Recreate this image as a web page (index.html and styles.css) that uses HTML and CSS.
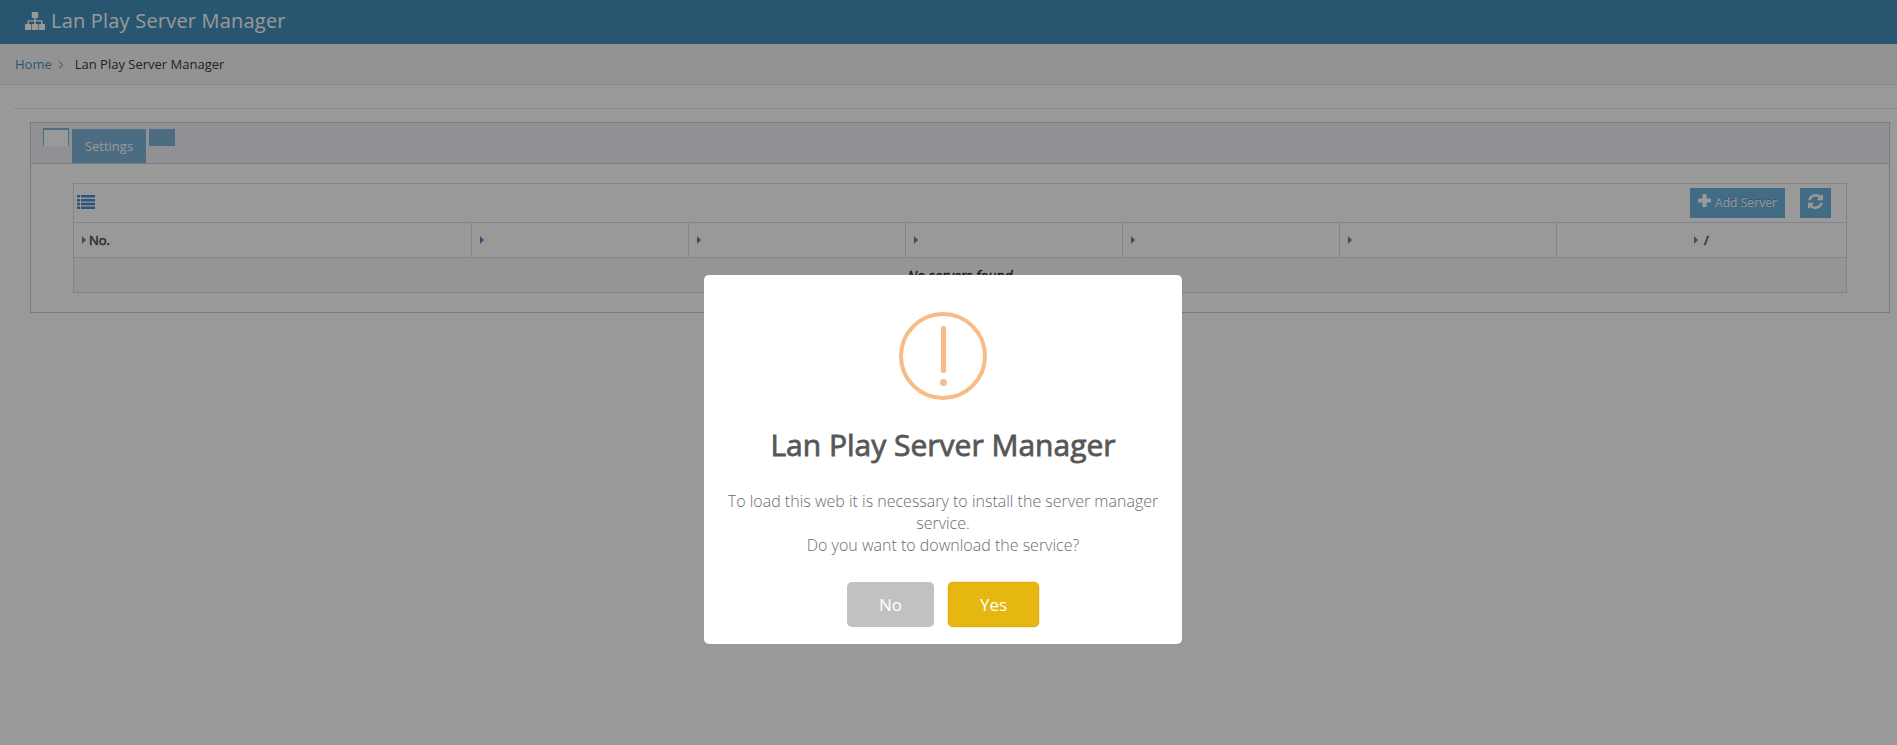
FILE: index.html
```html
<!DOCTYPE html>
<html lang="en">
<head>
<meta charset="utf-8">
<title>Lan Play Server Manager</title>
<link rel="stylesheet" href="styles.css">
</head>
<body>
<header class="navbar">
  <svg class="brand-icon" viewBox="0 0 20 18" width="20" height="18" fill="currentColor"><path d="M7.4 0h5.2q.6 0 .6.6v4.8q0 .6-.6.6h-1.8v2.2h5.4q1.3 0 1.3 1.3V12h1.9q.6 0 .6.6v4.8q0 .6-.6.6h-4.9q-.6 0-.6-.6v-4.8q0-.6.6-.6H16V9.600h-5.200V12h1.900q.6 0 .6.6v4.800q0 .6-.6.6H7.300q-.6 0-.6-.6v-4.800q0-.6.6-.6h1.900V9.600H4V12h1.500q.6 0 .6.6v4.800q0 .6-.6.6H.6q-.6 0-.6-.6v-4.800Q0 12 .6 12h1.900V9.500q0-1.300 1.300-1.300h5.400V6H7.400q-.6 0-.6-.6V.6q0-.6.6-.6z"/></svg>
  <span class="brand">Lan Play Server Manager</span>
</header>
<nav class="breadcrumbs">
  <a class="home">Home</a>
  <svg class="angle" viewBox="0 0 6 8" width="6" height="8"><path d="M1 .5l3.500 3.500L1 7.500" fill="none" stroke="currentColor" stroke-width="1.600"/></svg>
  <span>Lan Play Server Manager</span>
</nav>
<main class="content">
  <div class="rule"></div>
  <section class="widget">
    <div class="tabs">
      <span class="tab active"></span>
      <span class="tab settings">Settings</span>
      <span class="tab"></span>
    </div>
    <div class="widget-body">
      <div class="table">
        <div class="toolbar">
          <svg class="list-icon" viewBox="0 0 18 14" width="18" height="14" fill="currentColor"><path d="M0 0h3v2.500H0zM4 0h14v2.500H4zM0 4h3v2.500H0zM4 4h14v2.500H4zM0 7.800h3v2.400H0zM4 7.800h14v2.400H4zM0 11.500h3V14H0zM4 11.500h14V14H4z"/></svg>
          <div class="actions">
            <span class="btn add"><svg class="plus" viewBox="0 0 13 13" width="13" height="13" fill="currentColor"><path d="M5.300 0h2.400q.9 0 .9.900v3.500h3.500q.9 0 .9.900v2.400q0 .9-.9.900H8.600v3.500q0 .9-.9.900H5.300q-.9 0-.9-.9V8.600H.9Q0 8.600 0 7.700V5.300q0-.9.900-.9h3.500V.9q0-.9.900-.9z"/></svg>Add Server</span>
            <span class="btn refresh"><svg viewBox="0 0 1536 1536" width="15" height="15" fill="currentColor"><path d="M1511 928q0 5-1 7-64 268-268 434.500t-478 166.500q-146 0-282.500-55t-243.500-157l-129 129q-19 19-45 19t-45-19-19-45v-448q0-26 19-45t45-19h448q26 0 45 19t19 45-19 45l-137 137q71 66 161 102t187 36q134 0 250-65t186-179q11-17 53-117 8-23 30-23h192q13 0 22.500 9.500t9.500 22.500zm25-800v448q0 26-19 45t-45 19h-448q-26 0-45-19t-19-45 19-45l138-138q-148-137-349-137-134 0-250 65t-186 179q-11 17-53 117-8 23-30 23h-199q-13 0-22.500-9.500t-9.500-22.500v-7q65-268 270-434.500t480-166.500q146 0 284 55.500t245 156.500l130-129q19-19 45-19t45 19 19 45z"/></svg></span>
          </div>
        </div>
        <div class="head">
          <div class="cell"><i class="caret"></i><b class="faux">No.</b></div>
          <div class="cell"><i class="caret"></i></div>
          <div class="cell"><i class="caret"></i></div>
          <div class="cell"><i class="caret"></i></div>
          <div class="cell"><i class="caret"></i></div>
          <div class="cell"><i class="caret"></i></div>
          <div class="cell last"><i class="caret"></i><b class="faux slash">/</b></div>
        </div>
        <div class="empty"><span>No servers found</span></div>
      </div>
    </div>
  </section>
</main>
<div class="overlay">
  <div class="modal">
    <svg class="warn" viewBox="0 0 88 88" width="88" height="88"><circle cx="44" cy="44" r="42" fill="none" stroke="#f8bb86" stroke-width="4"/><rect x="42" y="14" width="5" height="47" rx="2" fill="#f8bb86"/><circle cx="44.500" cy="70.500" r="3.500" fill="#f8bb86"/></svg>
    <h2 class="title">Lan Play Server Manager</h2>
    <p class="message">To load this web it is necessary to install the server manager service.<br>Do you want to download the service?</p>
    <div class="buttons">
      <button class="choice no">No</button>
      <button class="choice yes">Yes</button>
    </div>
  </div>
</div>
</body>
</html>
```
FILE: styles.css
```css
* { box-sizing: border-box; }
body {
  margin: 0;
  height: 745px;
  overflow: hidden;
  background: #fff;
  color: #393939;
  font: 13px/20px "Open Sans", sans-serif;
}
svg { display: block; flex: none; }
.navbar {
  height: 44px;
  padding-left: 25px;
  display: flex;
  align-items: flex-start;
  background: #438eb9;
  color: #fff;
}
.brand-icon { margin-top: 12px; }
.brand { margin-left: 6px; font-size: 20px; line-height: 41px; letter-spacing: .2px; }
.breadcrumbs {
  height: 41px;
  padding: 0 0 0 15px;
  display: flex;
  align-items: center;
  background: #f5f5f5;
  border-bottom: 1px solid #e5e5e5;
}
.home { color: #4c8fbd; }
.angle { margin: 2px 11px 0 6px; color: #b2b6bf; }
.content { padding: 23px 0 0 15px; }
.rule { border-top: 1px dotted #ccc; }
.widget { margin: 13px 7px 0 15px; height: 191px; border: 1px solid #c5d0dc; }
.tabs {
  height: 41px;
  padding: 5px 0 0 12px;
  display: flex;
  align-items: flex-start;
  gap: 3px;
  background: #f0f2f7;
  border-bottom: 1px solid #c5d0dc;
}
.tab { width: 26px; height: 17px; margin-top: 1px; background: #7db4d8; color: #fff; text-align: center; }
.tab.active { height: 18px; margin-top: 0; background: #fff; border: 1px solid #7db4d8; border-top-width: 2px; border-bottom: 0; }
.tab.settings { width: 74px; height: 34px; line-height: 34px; }
.widget-body { padding: 19px 42px 0; }
.table { height: 110px; border: 1px solid #ddd; }
.toolbar {
  height: 39px;
  padding: 0 15px 0 3px;
  display: flex;
  align-items: center;
  justify-content: space-between;
  border-bottom: 1px solid #d5dfe8;
  color: #478fca;
}
.list-icon { margin-top: -2px; color: #478fca; }
.actions { display: flex; gap: 15px; }
.btn {
  height: 30px;
  display: flex;
  align-items: flex-start;
  background: #6fb3e0;
  color: #fff;
  text-shadow: 0 -1px 0 rgba(0, 0, 0, .25);
}
.add { width: 95px; padding-left: 8px; line-height: 30px; font-size: 12px; letter-spacing: .08px; white-space: nowrap; }
.plus { margin: 6px 4px 0 0; }
.refresh { width: 31px; padding: 6px 0 0 8px; }
.head { height: 35px; display: grid; grid-template-columns: 398px repeat(5, 217px) 1fr; border-bottom: 1px solid #ddd; }
.cell { display: flex; align-items: center; padding-left: 8px; border-right: 1px solid #ddd; }
.cell.last { border-right: 0; padding-left: 137px; }
.caret { border-left: 4px solid #478fca; border-top: 4px solid transparent; border-bottom: 4px solid transparent; }
.faux { margin-left: 3px; font-weight: 400; color: #555; -webkit-text-stroke: .6px currentColor; }
.slash { margin-left: 6px; }
.empty { height: 34px; line-height: 35px; font-size: 14px; text-align: center; background: #f9f9f9; color: #222; font-style: italic; -webkit-text-stroke: .3px currentColor; }
.overlay {
  position: fixed;
  inset: 0;
  display: flex;
  align-items: flex-start;
  justify-content: center;
  background: rgba(0, 0, 0, .4);
}
.modal {
  width: 478px;
  height: 369px;
  margin: 275px 11px 0 0;
  padding: 37px 17px 0;
  background: #fff;
  border-radius: 5px;
  text-align: center;
}
.warn { margin: 0 auto; }
.title { margin: 25px 0; font-size: 30px; line-height: 40px; font-weight: 400; color: #575757; -webkit-text-stroke: .8px #575757; }
.message { margin: 0; font-size: 16px; line-height: 22px; font-weight: 300; color: #6c6c6c; }
.buttons { margin-top: 26px; display: flex; justify-content: center; gap: 14px; }
.choice { height: 45px; padding: 0; border: 0; border-radius: 5px; color: #fff; font: 500 17px/45px "Open Sans", sans-serif; }
.no { width: 87px; background: #c1c1c1; }
.yes { width: 91px; background: #e6b711; box-shadow: 0 0 2px rgba(230, 183, 17, .8), inset 0 0 0 1px rgba(0, 0, 0, .05); }
```
